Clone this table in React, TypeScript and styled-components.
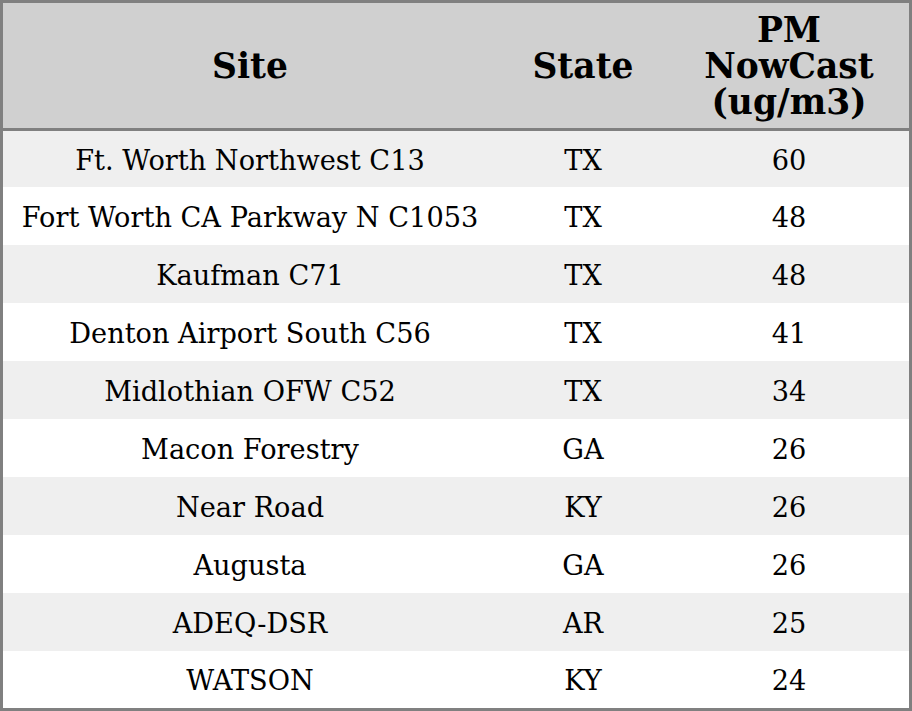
import React, { FC } from "react";
import styled, { createGlobalStyle } from "styled-components";

interface Reading {
  site: string;
  state: string;
  value: number;
}

const readings: Reading[] = [
  { site: "Ft. Worth Northwest C13", state: "TX", value: 60 },
  { site: "Fort Worth CA Parkway N C1053", state: "TX", value: 48 },
  { site: "Kaufman C71", state: "TX", value: 48 },
  { site: "Denton Airport South C56", state: "TX", value: 41 },
  { site: "Midlothian OFW C52", state: "TX", value: 34 },
  { site: "Macon Forestry", state: "GA", value: 26 },
  { site: "Near Road", state: "KY", value: 26 },
  { site: "Augusta", state: "GA", value: 26 },
  { site: "ADEQ-DSR", state: "AR", value: 25 },
  { site: "WATSON", state: "KY", value: 24 },
];

const GlobalStyle = createGlobalStyle`
  html, body {
    margin: 0;
    padding: 0;
    background: #ffffff;
  }
`;

const App: FC = () => (
  <>
    <GlobalStyle />
    <Table>
      <colgroup>
        <col style={{ width: 494 }} />
        <col style={{ width: 172 }} />
        <col style={{ width: 240 }} />
      </colgroup>
      <thead>
        <tr>
          <HeadCell>Site</HeadCell>
          <HeadCell>State</HeadCell>
          <HeadCell>
            <HeadLine>PM</HeadLine>
            <HeadLine>NowCast</HeadLine>
            <HeadLine>(ug/m3)</HeadLine>
          </HeadCell>
        </tr>
      </thead>
      <tbody>
        {readings.map((r, i) => (
          <Row key={`row-${i}`} $shaded={i % 2 === 0}>
            <Cell>{r.site}</Cell>
            <Cell>{r.state}</Cell>
            <Cell>{r.value}</Cell>
          </Row>
        ))}
      </tbody>
    </Table>
  </>
);

const Table = styled.table`
  box-sizing: border-box;
  width: 912px;
  border-collapse: separate;
  border-spacing: 0;
  border: 3px solid #808080;
  table-layout: fixed;
  font-family: "DejaVu Serif", serif;
  color: #000000;
`;

const HeadCell = styled.th`
  box-sizing: border-box;
  height: 128px;
  padding: 0;
  background-color: #d0d0d0;
  border-bottom: 3px solid #808080;
  font-size: 34.5px;
  font-weight: 700;
  line-height: 36px;
  text-align: center;
  vertical-align: middle;
`;

const HeadLine = styled.div`
  height: 36px;
  line-height: 36px;
`;

const Row = styled.tr<{ $shaded: boolean }>`
  height: 58px;
  background-color: ${(p) => (p.$shaded ? "#efefef" : "#ffffff")};

  &:first-child {
    height: 56px;
  }

  &:last-child {
    height: 57px;
  }
`;

const Cell = styled.td`
  padding: 0;
  padding-top: 3px;
  font-size: 27.2px;
  line-height: 32px;
  text-align: center;
  vertical-align: middle;
`;

export default App;
